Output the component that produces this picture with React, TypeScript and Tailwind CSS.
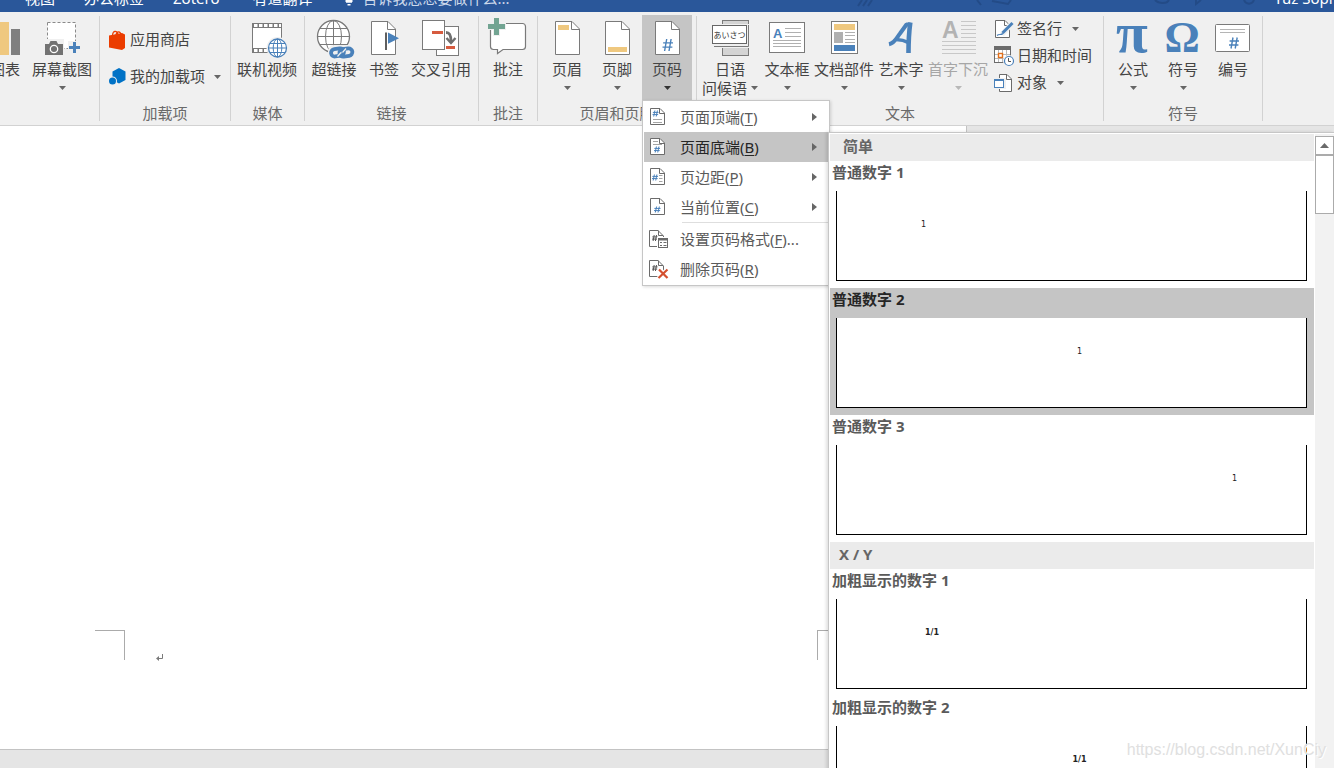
import type { ReactNode } from "react";

const GRAY = "#7a7a7a";
const BLUE = "#4a81ba";
const GOLD = "#efc87f";

function DownArrow({ className = "text-[#666]" }: { className?: string }) {
  return (
    <svg width="7" height="4" viewBox="0 0 7 4" className={className} aria-hidden="true">
      <path d="M0 0h7L3.5 4z" fill="currentColor" />
    </svg>
  );
}

function Big({ children }: { children: ReactNode }) {
  return (
    <svg width="44" height="44" viewBox="0 0 44 44" fill="none" className="shrink-0 overflow-visible" aria-hidden="true">
      {children}
    </svg>
  );
}

function Small({ children }: { children: ReactNode }) {
  return (
    <svg width="20" height="20" viewBox="0 0 20 20" fill="none" className="shrink-0 overflow-visible" aria-hidden="true">
      {children}
    </svg>
  );
}

function Hash({ x, y, w, h, color = BLUE, sw = 1.5 }: { x: number; y: number; w: number; h: number; color?: string; sw?: number }) {
  const d = `M${x + w * 0.4} ${y}L${x + w * 0.2} ${y + h}M${x + w * 0.82} ${y}L${x + w * 0.62} ${y + h}M${x + w * 0.06} ${y + h * 0.32}H${x + w}M${x} ${y + h * 0.68}H${x + w * 0.94}`;
  return <path d={d} stroke={color} strokeWidth={sw} />;
}

function Sheet({ children }: { children?: ReactNode }) {
  return (
    <Big>
      <path d="M10.500 6.500H27L34.500 14V39.500H10.500z" fill="#fff" stroke={GRAY} />
      <path d="M26.500 6.500V14.500H34.500" stroke={GRAY} />
      {children}
    </Big>
  );
}

const ChartIcon = () => (
  <Big>
    <rect x="14" y="7" width="12" height="33" fill={GOLD} />
    <rect x="28" y="14" width="9" height="26" fill="#7f7f7f" />
  </Big>
);

const ScreenshotIcon = () => (
  <Big>
    <rect x="7.500" y="7.500" width="28" height="26" fill="#fff" stroke="#8a8a8a" strokeDasharray="3 2" />
    <rect x="4" y="24" width="20" height="16" fill="#f0f0f0" />
    <path d="M5 29h4l1.500-3h6l1.500 3h5v11H5z" fill="#727272" />
    <circle cx="14" cy="34" r="3.700" fill="#727272" stroke="#fff" strokeWidth="1.300" />
    <rect x="28" y="26" width="13" height="13" fill="#f0f0f0" />
    <path d="M34.500 27v11M29 32.500h11" stroke={BLUE} strokeWidth="3" />
  </Big>
);

const VideoIcon = () => (
  <Big>
    <rect x="7.500" y="8.500" width="29" height="29" fill="#fff" stroke={GRAY} />
    <path d="M7 10.500h30M7 35.500h30" stroke={GRAY} strokeWidth="5" />
    <path d="M9 10.500h27M9 35.500h27" stroke="#fff" strokeWidth="3" strokeDasharray="3.500 1.500" />
    <circle cx="32.500" cy="33" r="11" fill="#f0f0f0" />
    <circle cx="32.500" cy="33" r="9" fill="#fff" stroke={BLUE} strokeWidth="1.300" />
    <ellipse cx="32.500" cy="33" rx="4.300" ry="9" stroke={BLUE} />
    <path d="M32.500 24v18M23.500 33h18M25 28.500h15M25 37.500h15" stroke={BLUE} />
  </Big>
);

const LinkIcon = () => (
  <Big>
    <circle cx="21.500" cy="21.500" r="16" fill="#fff" stroke={GRAY} strokeWidth="1.300" />
    <ellipse cx="21.500" cy="21.500" rx="8" ry="16" stroke={GRAY} />
    <path d="M21.500 5.500v32M5.500 21.500h32M8 13.500h27M8 29.500h27" stroke={GRAY} />
    <rect x="16" y="30" width="28" height="14" rx="6" fill="#f0f0f0" />
    <rect x="19" y="33.800" width="13" height="7.400" rx="3.700" stroke={BLUE} strokeWidth="3.800" transform="rotate(-8 25 37.500)" />
    <rect x="27.400" y="33.800" width="13" height="7.400" rx="3.700" stroke={BLUE} strokeWidth="3.800" transform="rotate(-8 34 37.500)" />
    <path d="M25.500 41.500l3.500-4M30.500 37.500l3.500-4" stroke="#f0f0f0" strokeWidth="1.200" />
  </Big>
);

const BookmarkIcon = () => (
  <Big>
    <path d="M9.500 6.500H26L33.500 14V39.500H9.500z" fill="#fff" stroke={GRAY} />
    <path d="M25.500 6.500V14.500H33.500" stroke={GRAY} />
    <path d="M24 17.500v17.500" stroke="#5f5f5f" strokeWidth="2" />
    <path d="M26 17.500l11 5.700-11 5.600z" fill={BLUE} />
  </Big>
);

const CrossRefIcon = () => (
  <Big>
    <rect x="17.500" y="11.500" width="22" height="29" fill="#fff" stroke={GRAY} />
    <rect x="3.500" y="5.500" width="22" height="29" fill="#fff" stroke={GRAY} />
    <rect x="13" y="16" width="11" height="3" fill="#d65b3f" />
    <rect x="27" y="31" width="9" height="3" fill="#d65b3f" />
    <path d="M27 17.500c4 0 5 3 5 9" stroke="#6f6f6f" strokeWidth="2.800" />
    <path d="M27.500 23l4.500 5 4.500-5" stroke="#6f6f6f" strokeWidth="2.400" />
  </Big>
);

const CommentIcon = () => (
  <Big>
    <path d="M7 8.500H36.500a3 3 0 0 1 3 3V31.500a3 3 0 0 1-3 3H17L11.500 38.500V34.500H7.500a3 3 0 0 1-3-3V11.500z" fill="#fff" />
    <path d="M4.500 14V31.500a3 3 0 0 0 3 3H11.500V38.500L17 34.500H36.500a3 3 0 0 0 3-3V11.500a3 3 0 0 0-3-3H18" stroke={GRAY} strokeWidth="1.200" />
    <path d="M10.500 2v19M1 11.500h19" stroke="#f0f0f0" strokeWidth="7" />
    <path d="M10.500 3v17M2 11.500h17" stroke="#72a492" strokeWidth="5" />
  </Big>
);

const HeaderIcon = () => (
  <Sheet>
    <rect x="13" y="10" width="11" height="5" fill={GOLD} />
  </Sheet>
);
const FooterIcon = () => (
  <Sheet>
    <rect x="13" y="32" width="19" height="5" fill={GOLD} />
  </Sheet>
);
const PageNumberIcon = () => (
  <Sheet>
    <Hash x={17.5} y={24} w={10.5} h={12} sw={1.4} />
  </Sheet>
);

const GreetingIcon = () => (
  <Big>
    <rect x="14.500" y="5.500" width="26" height="35" fill="#d4d4d4" stroke={GRAY} />
    <rect x="3" y="9" width="38" height="24" fill="#f0f0f0" />
    <path d="M40.500 10v21.500H6" stroke={GRAY} />
    <rect x="4.500" y="10.500" width="34" height="18" fill="#fff" stroke="#666" />
    <text x="5.500" y="22.500" fontSize="8" fill="#333" fontFamily="'Noto Sans CJK JP', sans-serif">
      あいさつ
    </text>
  </Big>
);

const TextBoxIcon = () => (
  <Big>
    <rect x="4.500" y="7.500" width="35" height="30" fill="#fff" stroke={GRAY} />
    <text x="8" y="23" fontSize="13" fontWeight="700" fill={BLUE} fontFamily="'Liberation Sans', sans-serif">
      A
    </text>
    <path d="M20 13.500h16M20 17.500h16M20 21.500h16M8 25.500h28M8 28.500h28M8 31.500h28" stroke="#b0b0b0" />
  </Big>
);

const PartsIcon = () => (
  <Big>
    <rect x="9.500" y="6.500" width="26" height="32" fill="#fff" stroke={GRAY} />
    <rect x="12" y="9" width="21" height="6" fill={GOLD} />
    <rect x="12" y="17" width="9" height="11" fill="#b0b0b0" />
    <path d="M23 17.500h10M23 20.500h10M23 24.500h10M23 27.500h10" stroke="#b0b0b0" />
    <rect x="12" y="30" width="21" height="6" fill={BLUE} />
  </Big>
);

const WordArtIcon = () => (
  <Big>
    <g stroke={BLUE}>
      <path d="M10 29.200C16 28 17.500 23 21 18.500L27.500 9.500H31.500" strokeWidth="4" strokeLinejoin="bevel" />
      <path d="M31.300 7.500C30 17 29.500 28 29.500 38" strokeWidth="4.600" />
      <path d="M18 24.800C22 24.500 25 25.500 29 27.300" strokeWidth="3.600" />
    </g>
  </Big>
);

const DropCapIcon = () => (
  <Big>
    <text x="6" y="23" fontSize="23" fontWeight="700" fill="#b3b3b3" fontFamily="'Liberation Sans', sans-serif">
      A
    </text>
    <path d="M25 6.500h15M25 10.500h15M25 14.500h15M25 18.500h15M25 22.500h15M6 26.500h34M6 30.500h34M6 34.500h34M6 38.500h34" stroke="#c8c8c8" />
  </Big>
);

const PiIcon = () => (
  <Big>
    <text x="21" y="37" textAnchor="middle" fontSize="58" fontWeight="700" fill={BLUE} fontFamily="'Liberation Serif', serif">
      π
    </text>
  </Big>
);
const OmegaIcon = () => (
  <Big>
    <text x="21" y="37" textAnchor="middle" fontSize="44" fontWeight="700" fill={BLUE} fontFamily="'Liberation Serif', serif">
      Ω
    </text>
  </Big>
);
const NumberIcon = () => (
  <Big>
    <rect x="4.500" y="9.500" width="34" height="27" rx="1" fill="#fff" stroke={GRAY} />
    <path d="M9 14.500h25M9 17.500h25" stroke="#b5b5b5" />
    <Hash x={18} y={22.5} w={10} h={11} sw={1.4} />
  </Big>
);

const StoreIcon = () => (
  <Small>
    <path d="M4.500 5C5 .5 9 0 10 4.500M8 5c.5-4 4.500-4.500 5 0" stroke="#eb3c00" strokeWidth="1.200" />
    <path d="M1 5.500L14 3l3 1.500V18l-3 2L1 17.500z" fill="#eb3c00" />
  </Small>
);
const AddinIcon = () => (
  <Small>
    <path d="M11 1l6.500 3.500v8.500L11 16.500 4.500 13V4.500z" fill="#0072c6" />
    <circle cx="4.500" cy="14" r="4.500" fill="#f0f0f0" />
    <circle cx="4.500" cy="14" r="3.500" fill="#0072c6" />
  </Small>
);
const SignatureIcon = () => (
  <Small>
    <path d="M1.500 1.500H11L15.500 6V18.500H1.500z" fill="#fff" stroke="#6b6b6b" />
    <path d="M10.500 1.500V6.500H15" stroke="#6b6b6b" />
    <path d="M8 15.500L17 5.500" stroke="#f0f0f0" strokeWidth="5" />
    <path d="M8.500 14L18.500 4" stroke={BLUE} strokeWidth="3" />
    <path d="M3 16.500c2-2 4 0 6-2" stroke={BLUE} strokeWidth="1.200" />
  </Small>
);
const DateIcon = () => (
  <Small>
    <rect x=".5" y=".5" width="16" height="16" fill="#fff" stroke="#6b6b6b" />
    <path d="M0 2h17" stroke="#6b6b6b" strokeWidth="4" />
    <path d="M4.500 4v12M8.500 4v12M12.500 4v12M1 8.500h15M1 12.500h15" stroke="#b9b9b9" />
    <rect x="4.500" y="7.500" width="4" height="4" fill="#fff" stroke="#e2701b" strokeWidth="1.400" />
    <circle cx="15" cy="15" r="6" fill="#f0f0f0" />
    <circle cx="15" cy="15" r="4.500" fill="#fff" stroke={BLUE} strokeWidth="1.200" />
    <path d="M14.500 12v3.500H17" stroke="#555" />
  </Small>
);
const ObjectIcon = () => (
  <Small>
    <path d="M5.500 1.500H13L17.500 6V18.500H5.500z" fill="#fff" stroke="#6b6b6b" />
    <path d="M12.500 1.500V6.500H17" stroke="#6b6b6b" />
    <rect x="-1" y="5" width="13" height="11" fill="#f0f0f0" />
    <rect x=".5" y="6.500" width="9" height="8" fill="#fff" stroke={BLUE} />
    <path d="M0 7h10" stroke={BLUE} strokeWidth="2" />
  </Small>
);

function MenuSheet({ children }: { children: ReactNode }) {
  return (
    <Small>
      <path d="M1.500 1.500H11L15.500 6V17.500H1.500z" fill="#fff" stroke="#6b6b6b" />
      <path d="M10.500 1.500V6.500H15" stroke="#6b6b6b" />
      {children}
    </Small>
  );
}
const TopIcon = () => (
  <MenuSheet>
    <Hash x={3.5} y={3.5} w={6} h={6} sw={1} />
    <path d="M4 12.500h9M4 15.500h9" stroke="#a5a5a5" />
  </MenuSheet>
);
const BottomIcon = () => (
  <MenuSheet>
    <Hash x={5} y={9.5} w={6} h={6} sw={1} />
    <path d="M4 4.500h5M4 7.500h9" stroke="#a5a5a5" />
  </MenuSheet>
);
const MarginIcon = () => (
  <MenuSheet>
    <Hash x={3} y={7.5} w={6} h={6} sw={1} />
    <path d="M10 8.500h3.500M10 11.500h3.500M10 14.500h3.500" stroke="#a5a5a5" />
  </MenuSheet>
);
const CurrentIcon = () => (
  <MenuSheet>
    <Hash x={5} y={9.5} w={6.5} h={6} sw={1} />
  </MenuSheet>
);
const FormatIcon = () => (
  <Small>
    <path d="M.5 1.500H9L14.500 7V17.500H.5z" fill="#fff" stroke="#6b6b6b" />
    <path d="M9.500 1.500V6.500H14" stroke="#6b6b6b" />
    <Hash x={3} y={6} w={5.5} h={6} sw={1} color="#555" />
    <rect x="8" y="8" width="12" height="13" fill="#fff" />
    <rect x="9.500" y="9.500" width="9" height="9" fill="#fff" stroke="#6b6b6b" />
    <path d="M9 10.500h10" stroke="#6b6b6b" strokeWidth="2" />
    <path d="M11 13.500h2M14.500 13.500h3M11 16.500h2M14.500 16.500h3" stroke="#6b6b6b" />
  </Small>
);
const RemoveIcon = () => (
  <Small>
    <path d="M.5 1.500H9L14.500 7V17.500H.5z" fill="#fff" stroke="#6b6b6b" />
    <path d="M9.500 1.500V6.500H14" stroke="#6b6b6b" />
    <Hash x={3} y={6} w={5.5} h={6} sw={1} color="#555" />
    <path d="M10 10.500l8 8.500M18 10.500l-8.500 9" stroke="#fff" strokeWidth="4.500" />
    <path d="M10 10.500l8.500 8.500M18.500 10.500l-9 8.500" stroke="#d4502f" strokeWidth="2.200" />
  </Small>
);

type RibbonButtonProps = {
  icon: ReactNode;
  label: string;
  second?: string;
  arrow?: boolean;
  size?: "narrow" | "wide";
  active?: boolean;
  disabled?: boolean;
};

function RibbonButton({ icon, label, second, arrow, size = "narrow", active, disabled }: RibbonButtonProps) {
  return (
    <button
      type="button"
      disabled={disabled}
      aria-pressed={active}
      className={`flex h-[85px] shrink-0 flex-col items-center whitespace-nowrap leading-5 ${size === "wide" ? "w-16" : "w-[50px]"} ${active ? "bg-[#c5c5c5]" : ""} ${disabled ? "text-[#a6a6a6]" : "text-[#444]"}`}
    >
      {icon}
      <span>{label}</span>
      {second ? (
        <span className="flex items-center gap-1 leading-[18px]">
          {second}
          <DownArrow />
        </span>
      ) : (
        arrow && (
          <span className="flex h-[18px] items-center">
            <DownArrow className={disabled ? "text-[#b8b8b8]" : active ? "text-[#333]" : "text-[#666]"} />
          </span>
        )
      )}
    </button>
  );
}

function RowButton({ icon, label, arrow, className }: { icon: ReactNode; label: string; arrow?: boolean; className: string }) {
  return (
    <button type="button" className={`flex items-center whitespace-nowrap text-[#444] ${className}`}>
      {icon}
      <span>{label}</span>
      {arrow && (
        <span className="ml-[7px]">
          <DownArrow />
        </span>
      )}
    </button>
  );
}

function Group({ title, className = "", children }: { title: string; className?: string; children: ReactNode }) {
  return (
    <>
      <section aria-label={title || "插图"} className="flex shrink-0 flex-col">
        <div className={`flex h-[85px] ${className}`}>{children}</div>
        <h2 className="h-[25px] text-center leading-[26px] text-[#6a6a6a]">{title}</h2>
      </section>
      <div className="mt-px mb-1 w-px shrink-0 bg-[#d2d2d2]" />
    </>
  );
}

type MenuItemProps = { icon: ReactNode; label: string; hotkey: string; tail?: string; submenu?: boolean; selected?: boolean; children?: ReactNode };

function MenuItem({ icon, label, hotkey, tail = "", submenu, selected, children }: MenuItemProps) {
  return (
    <li role="none" className="relative">
      <button
        type="button"
        role="menuitem"
        className={`flex h-[30px] w-full items-center pr-[11px] pl-[5px] ${selected ? "bg-[#c5c5c5] text-[#262626]" : "text-[#5a5a5a]"}`}
      >
        {icon}
        <span className="ml-[11px] flex-1 text-left whitespace-nowrap">
          {label}(<u className="underline-offset-2">{hotkey}</u>){tail}
        </span>
        {submenu && (
          <svg width="5" height="8" viewBox="0 0 5 8" aria-hidden="true">
            <path d="M0 0v8l5-4z" fill="#666" />
          </svg>
        )}
      </button>
      {children}
    </li>
  );
}

function GalleryTitle({ children, className }: { children: ReactNode; className: string }) {
  return <h3 className={`h-[27px] bg-[#ebebeb] leading-[25px] font-bold text-[#666] ${className}`}>{children}</h3>;
}

function GalleryItem({ title, sample, place, selected }: { title: string; sample: string; place: string; selected?: boolean }) {
  return (
    <button type="button" className={`block w-full pr-[7px] pb-[7px] text-left ${selected ? "bg-[#c5c5c5]" : ""}`}>
      <span className={`block h-[30px] pl-0.5 leading-[23px] font-bold ${selected ? "text-[#262626]" : "text-[#5a5a5a]"}`}>{title}</span>
      <span
        className={`ml-1.5 flex h-[90px] border-x border-b border-black bg-white pt-[29px] font-['DejaVu_Sans',sans-serif] text-[8px] leading-[10px] text-[#222] ${place}`}
      >
        {sample}
      </span>
    </button>
  );
}

function Gallery() {
  return (
    <div className="absolute top-0 left-full flex w-[506px] border-t border-l border-[#c6c6c6] bg-white pt-px pl-px shadow-[-2px_0_3px_rgba(0,0,0,0.12)]">
      <div className="flex-1">
        <GalleryTitle className="pl-[13px]">简单</GalleryTitle>
        <GalleryItem title="普通数字 1" sample="1" place="pl-[84px]" />
        <GalleryItem title="普通数字 2" sample="1" place="justify-center pl-4" selected />
        <GalleryItem title="普通数字 3" sample="1" place="justify-end pr-[69px]" />
        <GalleryTitle className="pl-[9px]">X / Y</GalleryTitle>
        <GalleryItem title="加粗显示的数字 1" sample="1/1" place="font-bold pl-[88px]" />
        <GalleryItem title="加粗显示的数字 2" sample="1/1" place="font-bold justify-center pl-4" />
      </div>
      <div className="ml-px flex w-[19px] flex-col bg-[#f2f2f2] pt-0.5">
        <button type="button" aria-label="向上滚动" className="flex h-[19px] items-center justify-center border border-[#ababab] bg-white">
          <svg width="9" height="5" viewBox="0 0 9 5" aria-hidden="true">
            <path d="M0 5h9L4.500 0z" fill="#6a6a6a" />
          </svg>
        </button>
        <div className="h-[59px] border border-[#ababab] bg-white" />
      </div>
    </div>
  );
}

function PageNumberMenu() {
  return (
    <ul role="menu" aria-label="页码" className="absolute top-full left-0 z-10 w-[188px] border border-[#c6c6c6] bg-white p-px shadow-[1px_1px_3px_rgba(0,0,0,0.15)]">
      <MenuItem icon={<TopIcon />} label="页面顶端" hotkey="T" submenu />
      <MenuItem icon={<BottomIcon />} label="页面底端" hotkey="B" submenu selected>
        <Gallery />
      </MenuItem>
      <MenuItem icon={<MarginIcon />} label="页边距" hotkey="P" submenu />
      <MenuItem icon={<CurrentIcon />} label="当前位置" hotkey="C" submenu />
      <li role="separator" className="mb-px ml-[38px] h-px bg-[#dedede]" />
      <MenuItem icon={<FormatIcon />} label="设置页码格式" hotkey="F" tail="..." />
      <MenuItem icon={<RemoveIcon />} label="删除页码" hotkey="R" />
    </ul>
  );
}

function TitleTabs() {
  return (
    <header className="flex h-3 shrink-0 items-end overflow-hidden bg-[#2a579a] pb-[3px] pl-[25px] leading-[22px] whitespace-nowrap text-white">
      <nav className="flex shrink-0 gap-[29px]">
        <button type="button">视图</button>
        <button type="button">办公标签</button>
        <button type="button">Zotero</button>
        <button type="button" className="px-1">
          有道翻译
        </button>
      </nav>
      <button type="button" className="ml-7 flex items-end gap-2.5 text-[#cdd9ea]">
        <svg width="8" height="16" viewBox="0 0 8 16" aria-hidden="true" className="mb-[3px]">
          <path d="M1 0h6v12H1z" fill="none" stroke="#fff" />
          <path d="M1 9h6v3.500H1zM2.500 14h3v1.500h-3z" fill="#fff" />
        </svg>
        告诉我您想要做什么...
      </button>
      <svg width="460" height="12" viewBox="0 0 460 12" fill="none" stroke="#234b87" strokeWidth="2" aria-hidden="true" className="-mb-[3px] ml-auto min-w-0 shrink">
        <path d="M44 6l4-6M49 6l4-6M54 6l4-6" />
        <path d="M163 0l4 5M178 1l16 3 3-4M341 0c4 4 12 4 14 0M382 0v4l5-4M430 0c2 5 8 5 10 0" />
      </svg>
      <span className="w-[60px] shrink-0">Yuz Sophia</span>
    </header>
  );
}

export default function App() {
  return (
    <div className="relative flex h-screen flex-col overflow-hidden bg-white font-['Noto_Sans','Noto_Sans_CJK_SC',sans-serif] text-[15px]">
      <TitleTabs />

      <div className="relative z-10 flex shrink-0 border-b border-[#d2d2d2] bg-[#f0f0f0] pt-[3px]">
        <Group title="" className="-ml-5 pr-[5px]">
          <RibbonButton icon={<ChartIcon />} label="图表" />
          <RibbonButton icon={<ScreenshotIcon />} label="屏幕截图" size="wide" arrow />
        </Group>
        <Group title="加载项" className="w-[130px] flex-col pt-1.5 pl-2">
          <RowButton icon={<StoreIcon />} label="应用商店" className="h-[37px] gap-0.5" />
          <RowButton icon={<AddinIcon />} label="我的加载项" arrow className="h-[37px] gap-0.5" />
        </Group>
        <Group title="媒体" className="pr-[5px] pl-1">
          <RibbonButton icon={<VideoIcon />} label="联机视频" size="wide" />
        </Group>
        <Group title="链接" className="px-1">
          <RibbonButton icon={<LinkIcon />} label="超链接" />
          <RibbonButton icon={<BookmarkIcon />} label="书签" />
          <RibbonButton icon={<CrossRefIcon />} label="交叉引用" size="wide" />
          <span className="w-px" />
        </Group>
        <Group title="批注" className="px-1">
          <RibbonButton icon={<CommentIcon />} label="批注" />
        </Group>
        <Group title="页眉和页脚" className="px-1">
          <RibbonButton icon={<HeaderIcon />} label="页眉" arrow />
          <RibbonButton icon={<FooterIcon />} label="页脚" arrow />
          <div className="relative">
            <RibbonButton icon={<PageNumberIcon />} label="页码" arrow active />
            <PageNumberMenu />
          </div>
        </Group>
        <Group title="文本" className="w-[406px] pl-px">
          <RibbonButton icon={<GreetingIcon />} label="日语" second="问候语" size="wide" />
          <RibbonButton icon={<TextBoxIcon />} label="文本框" arrow />
          <RibbonButton icon={<PartsIcon />} label="文档部件" size="wide" arrow />
          <RibbonButton icon={<WordArtIcon />} label="艺术字" arrow />
          <RibbonButton icon={<DropCapIcon />} label="首字下沉" size="wide" arrow disabled />
          <div className="flex flex-col pl-1">
            <RowButton icon={<SignatureIcon />} label="签名行" arrow className="h-[27px] gap-[3px]" />
            <RowButton icon={<DateIcon />} label="日期和时间" className="h-[27px] gap-[3px]" />
            <RowButton icon={<ObjectIcon />} label="对象" arrow className="h-[27px] gap-[3px]" />
          </div>
        </Group>
        <Group title="符号" className="px-1">
          <RibbonButton icon={<PiIcon />} label="公式" arrow />
          <RibbonButton icon={<OmegaIcon />} label="符号" arrow />
          <RibbonButton icon={<NumberIcon />} label="编号" />
        </Group>
      </div>

      <main className="flex flex-1 bg-[#e5e5e5]">
        <div className="flex w-[967px] items-end border-r border-[#c3c3c3] bg-white pr-[119px] pb-[89px] pl-[95px]">
          <div className="size-[30px] border-t border-r border-[#ababab]" />
          <svg width="8" height="8" viewBox="0 0 8 8" aria-hidden="true" className="-mb-0.5 ml-[31px]">
            <path d="M6.500 0v4.500H2" fill="none" stroke="#7a7a7a" />
            <path d="M0 4.500L3 2v5z" fill="#7a7a7a" />
          </svg>
          <div className="ml-auto size-[30px] border-t border-l border-[#ababab]" />
        </div>
      </main>
      <footer className="h-[19px] shrink-0 border-t border-[#c3c3c3] bg-[#e5e5e5]" />

      <span className="absolute right-2 bottom-2 z-20 font-['Liberation_Sans',sans-serif] text-base leading-5 text-[#e0e0e0] [text-shadow:1px_1px_0_#fff]">
        https://blog.csdn.net/XunCiy
      </span>
    </div>
  );
}
